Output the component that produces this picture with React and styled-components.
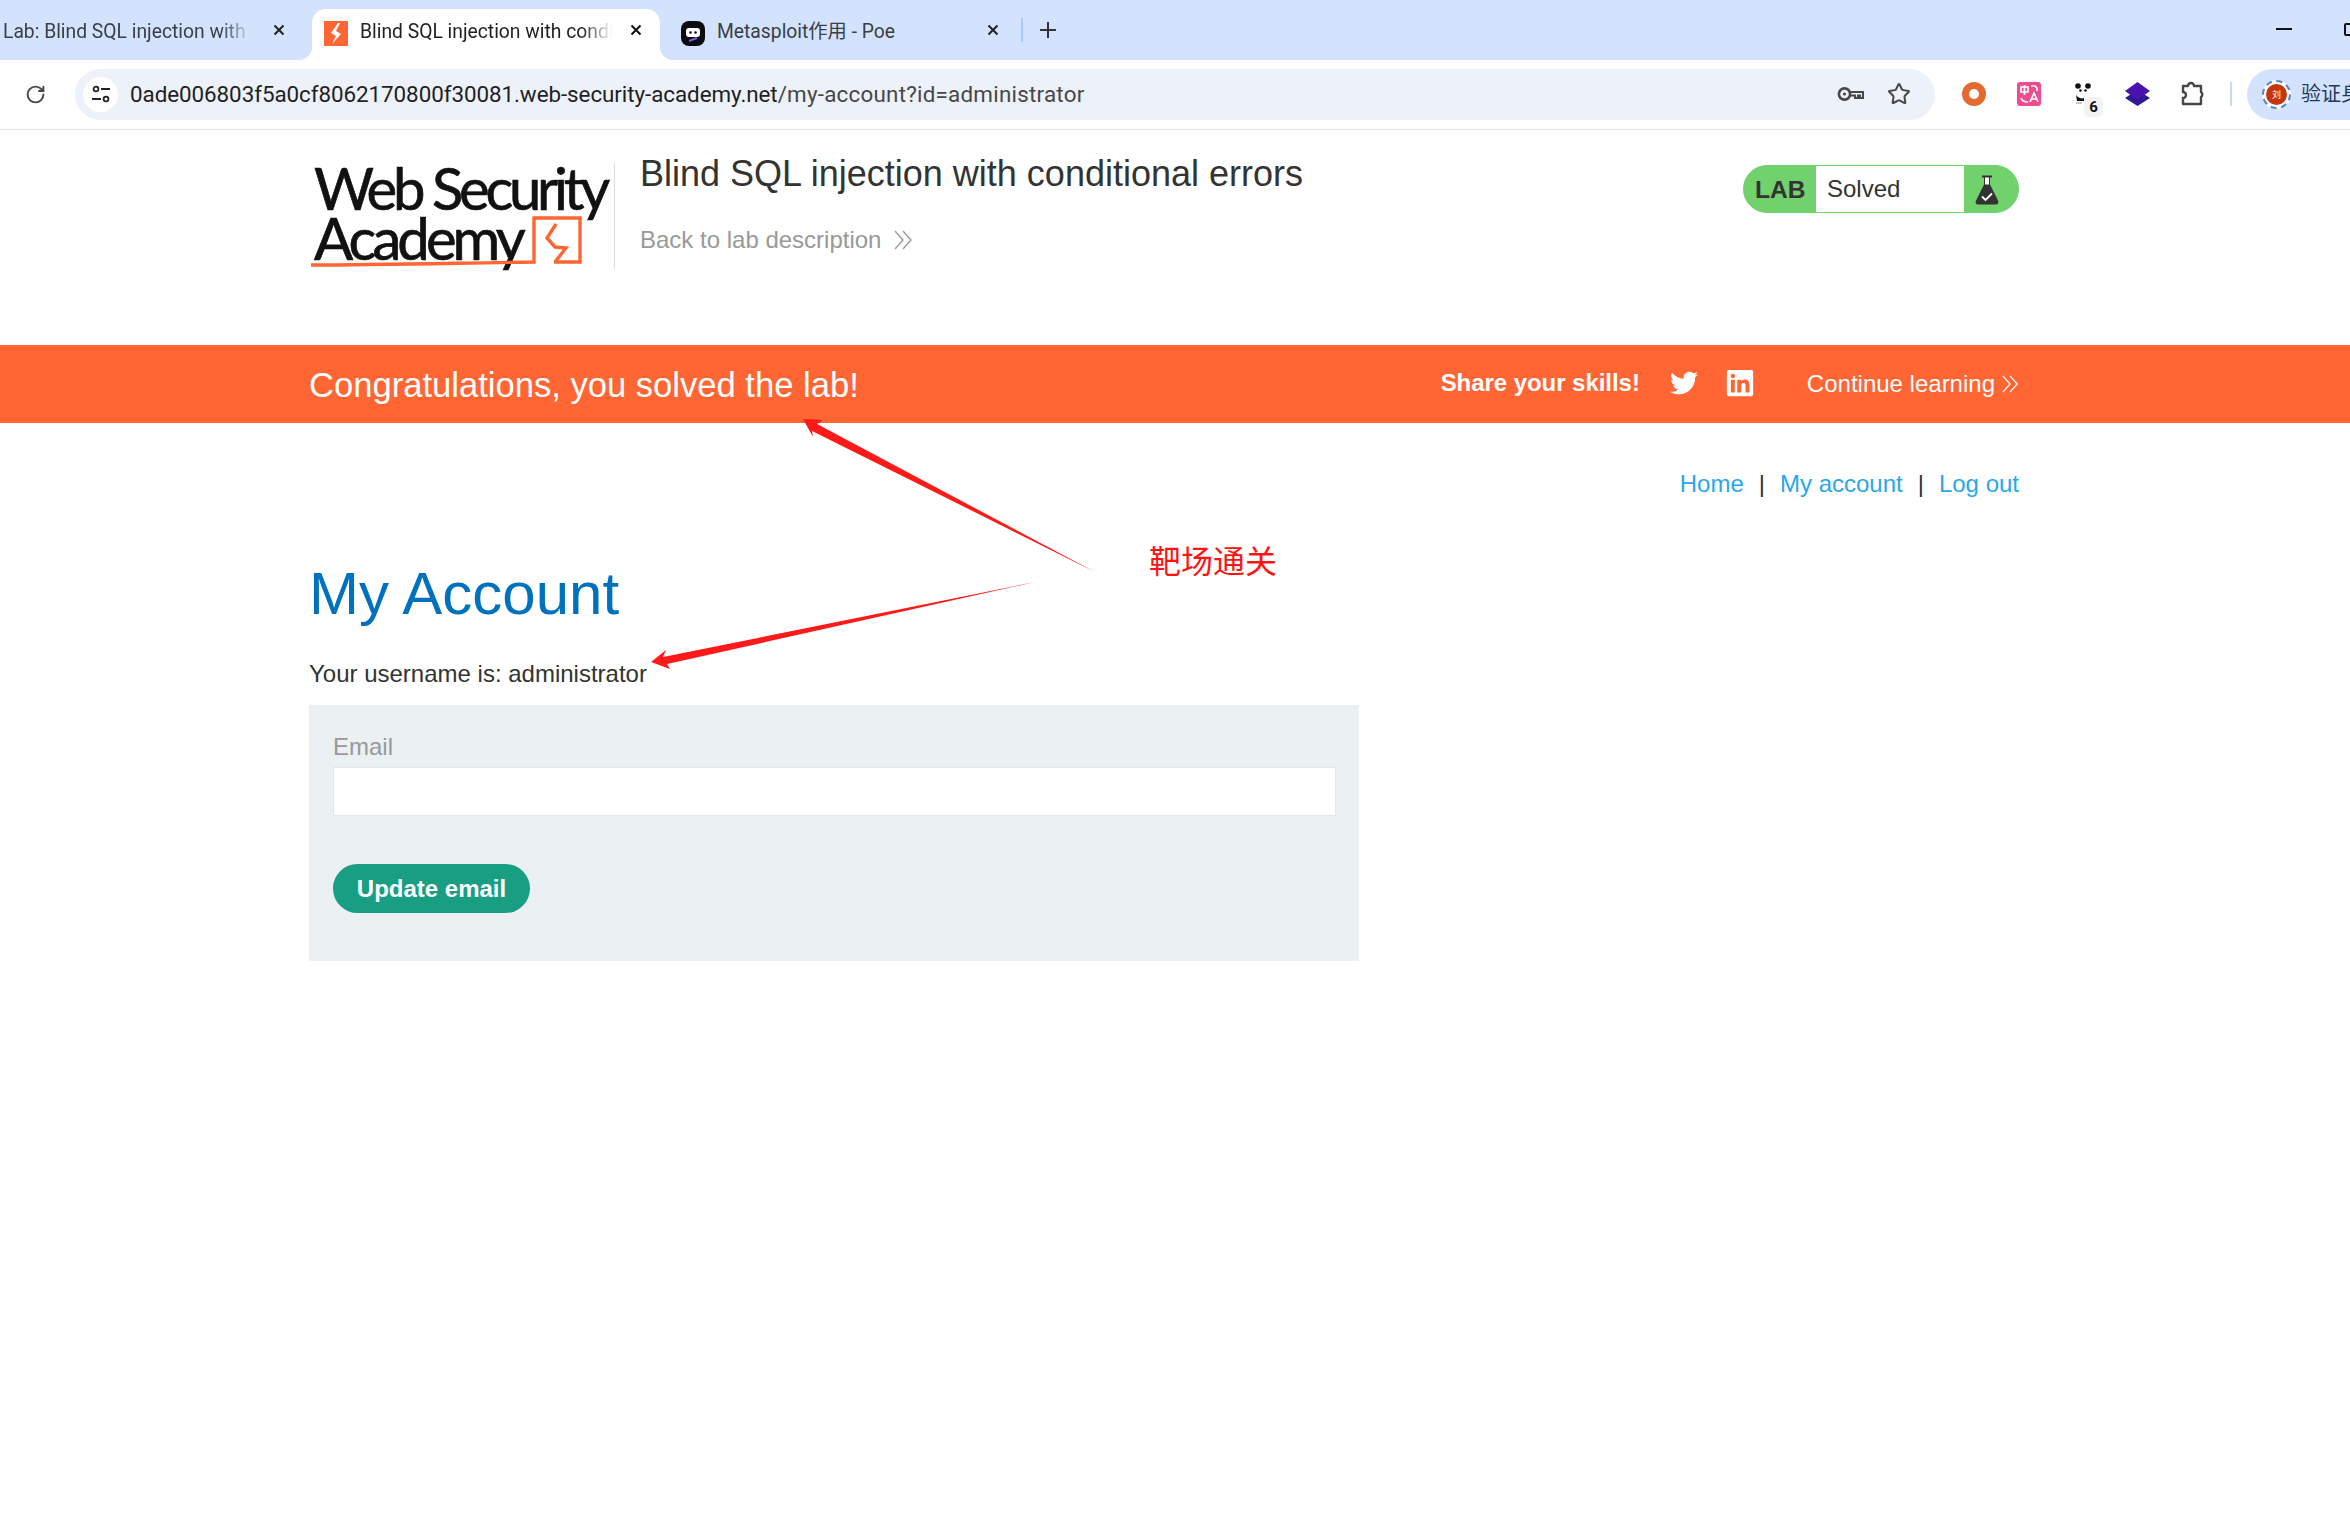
import React from "react";
import styled, { createGlobalStyle } from "styled-components";
import { FaTwitter, FaLinkedin } from "react-icons/fa";
import { RotateCw, Star } from "lucide-react";

const Global = createGlobalStyle`
  html, body { margin: 0; padding: 0; background: #fff; }
  body { font-family: "Liberation Sans", Arial, sans-serif; overflow: hidden; }
  * { box-sizing: border-box; }
`;

const Page = styled.div`
  position: relative;
  width: 2350px;
  height: 1513px;
  overflow: hidden;
  background: #fff;
`;

/* ---------- browser chrome ---------- */
const TabStrip = styled.div`
  display: flex;
  align-items: flex-end;
  height: 60px;
  background: #d3e3fd;
  position: relative;
`;
const Tab = styled.div`
  position: relative;
  display: flex;
  align-items: center;
  flex: none;
  width: ${(p) => p.$width}px;
  height: 51px;
  padding: 0 0 0 ${(p) => p.$pad}px;
  background: ${(p) => (p.$active ? "#fff" : "transparent")};
  border-radius: 14px 14px 0 0;
  font-family: Roboto, "Noto Sans CJK SC", sans-serif;
  font-size: 19.3px;
  color: #3a3f45;
  ${(p) =>
    p.$active &&
    `
    color: #1f1f1f;
    &::before, &::after {
      content: "";
      position: absolute;
      bottom: 0;
      width: 14px;
      height: 14px;
    }
    &::before { left: -14px; background: radial-gradient(circle at 0 0, transparent 14px, #fff 14.5px); }
    &::after { right: -14px; background: radial-gradient(circle at 100% 0, transparent 14px, #fff 14.5px); }
  `}
`;
const Favicon = styled.span`
  flex: none;
  display: flex;
  width: 24px;
  height: 25px;
  margin-right: 12px;
  margin-top: -2px;
`;
const TabTitle = styled.span`
  flex: none;
  width: ${(p) => p.$width}px;
  white-space: nowrap;
  overflow: hidden;
  line-height: 24px;
  margin-top: -5px;
  -webkit-mask-image: ${(p) =>
    p.$fade ? "linear-gradient(90deg, #000 88%, transparent 100%)" : "none"};
`;
const TabClose = styled.span`
  position: absolute;
  left: ${(p) => p.$left}px;
  top: 15px;
  width: 12px;
  height: 12px;
  display: flex;
`;
const TabSep = styled.span`
  width: 2px;
  height: 24px;
  background: #a8c7fa;
  margin: 0 0 18px 11px;
`;
const NewTab = styled.span`
  display: flex;
  width: 16px;
  height: 16px;
  margin: 0 0 22px 17px;
`;
const Minimize = styled.span`
  position: absolute;
  left: 2276px;
  top: 28px;
  width: 16px;
  height: 2px;
  background: #111;
`;
const Restore = styled.span`
  position: absolute;
  left: 2344px;
  top: 23px;
  width: 12px;
  height: 13px;
  border: 2px solid #111;
  border-radius: 2px;
`;
const AddressRow = styled.div`
  display: flex;
  align-items: center;
  height: 70px;
  padding-bottom: 1px;
  background: #fff;
  border-bottom: 1px solid #e3e3e3;
`;
const Reload = styled.span`
  flex: none;
  display: flex;
  width: 75px;
  justify-content: center;
  padding-right: 4px;
  color: #474747;
`;
const Omnibox = styled.div`
  flex: none;
  display: flex;
  align-items: center;
  width: 1860px;
  height: 51px;
  padding: 0 10px 0 8px;
  border-radius: 26px;
  background: #ecf1fa;
`;
const SiteButton = styled.span`
  flex: none;
  display: flex;
  align-items: center;
  justify-content: center;
  width: 35px;
  height: 35px;
  margin-right: 12px;
  border-radius: 50%;
  background: #fff;
`;
const Url = styled.span`
  flex: 1;
  font-family: Roboto, sans-serif;
  font-size: 22.4px;
  line-height: 30px;
  color: #1f1f1f;
  white-space: nowrap;
  letter-spacing: -0.06px;
`;
const UrlRest = styled.span`
  color: #474747;
  letter-spacing: 0.23px;
`;
const OmniIcon = styled.span`
  flex: none;
  display: flex;
  margin-left: ${(p) => p.$gap || 0}px;
  margin-right: ${(p) => p.$right || 0}px;
  color: #474747;
`;
const Extension = styled.span`
  position: relative;
  flex: none;
  display: flex;
  justify-content: ${(p) => (p.$start ? "flex-start" : "center")};
  padding-left: ${(p) => (p.$start ? 3 : 0)}px;
  width: 26px;
  margin-left: ${(p) => p.$gap}px;
`;
const CountBadge = styled.span`
  position: absolute;
  left: 12px;
  top: 14px;
  width: 19px;
  height: 20px;
  border-radius: 5px;
  background: #f3f3f3;
  font-family: Roboto, sans-serif;
  font-weight: 700;
  font-size: 15px;
  line-height: 20px;
  text-align: center;
  color: #111;
`;
const ToolbarSep = styled.span`
  flex: none;
  width: 2px;
  height: 24px;
  margin-left: 24px;
  background: #c7dafa;
`;
const Profile = styled.div`
  flex: none;
  display: flex;
  align-items: center;
  width: 140px;
  height: 51px;
  margin-left: 15px;
  padding-left: 15px;
  border-radius: 26px 0 0 26px;
  background: #d3e3fd;
`;
const Avatar = styled.span`
  flex: none;
  display: flex;
  align-items: center;
  justify-content: center;
  width: 29px;
  height: 29px;
  margin-right: 10px;
  border-radius: 50%;
  border: 2px dashed #5a85c2;
  background: #fff;
`;
const AvatarInner = styled.span`
  display: flex;
  align-items: center;
  justify-content: center;
  width: 21px;
  height: 21px;
  border-radius: 50%;
  background: #c5360f;
  color: #fff;
  font-family: "Noto Sans CJK SC", sans-serif;
  font-size: 9px;
`;
const ProfileName = styled.span`
  font-family: "Noto Sans CJK SC", sans-serif;
  font-size: 20px;
  line-height: 26px;
  margin-top: -2px;
  color: #1f3a5f;
  white-space: nowrap;
`;

/* ---------- site header ---------- */
const Header = styled.header`
  display: flex;
  height: 215px;
  padding: 0 331px 0 309px;
`;
const LogoBlock = styled.div`
  position: relative;
  flex: none;
  width: 306px;
  height: 106px;
  margin-top: 33px;
  border-right: 1px solid #dcdcdc;
`;
const LogoLine = styled.div`
  position: absolute;
  left: 5px;
  top: ${(p) => p.$top}px;
  font-family: Lato, "Open Sans", sans-serif;
  font-weight: 400;
  font-size: 58px;
  line-height: 50px;
  letter-spacing: ${(p) => p.$spacing}px;
  -webkit-text-stroke: 0.7px #111;
  color: #111;
  white-space: nowrap;
`;
const LogoMark = styled.svg`
  position: absolute;
  left: 0;
  top: 50px;
  width: 280px;
  height: 70px;
  overflow: visible;
`;
const TitleBlock = styled.div`
  flex: 1;
  padding: 22px 0 0 25px;
`;
const LabTitle = styled.h2`
  margin: 0;
  font-weight: 400;
  font-size: 36px;
  line-height: 44px;
  color: #333332;
`;
const BackLink = styled.a`
  display: flex;
  align-items: center;
  margin-top: 29px;
  font-size: 24px;
  line-height: 30px;
  color: #999;
`;
const Chevrons = styled.svg`
  flex: none;
  width: ${(p) => p.$w || 20}px;
  height: 22px;
  margin-left: ${(p) => p.$gap || 12}px;
`;
const StatusWidget = styled.div`
  flex: none;
  display: flex;
  align-self: flex-start;
  width: 276px;
  height: 48px;
  margin-top: 35px;
  border: 1px solid #70d16d;
  border-radius: 24px;
  overflow: hidden;
  background: #70d16d;
`;
const StatusLabel = styled.span`
  flex: none;
  width: 72px;
  padding-left: 11px;
  font-weight: 700;
  font-size: 24.6px;
  line-height: 47px;
  color: #333332;
`;
const StatusValue = styled.span`
  flex: none;
  width: 148px;
  padding-left: 11px;
  background: #fff;
  font-size: 24px;
  line-height: 46px;
  color: #333332;
`;
const StatusIcon = styled.span`
  flex: 1;
  display: flex;
  justify-content: center;
  align-items: center;
  padding-right: 9px;
`;

/* ---------- banner ---------- */
const Banner = styled.section`
  display: flex;
  align-items: center;
  height: 78px;
  padding: 0 331px 0 309px;
  background: #ff6633;
  color: #fff;
`;
const BannerTitle = styled.h4`
  flex: 1;
  margin: 2px 0 0;
  font-weight: 400;
  font-size: 34.6px;
  line-height: 44px;
`;
const ShareLabel = styled.span`
  font-weight: 700;
  font-size: 23.9px;
  margin-top: -3px;
`;
const Social = styled.span`
  display: flex;
  margin-left: ${(p) => p.$gap}px;
  margin-top: -2px;
`;
const Continue = styled.a`
  display: flex;
  align-items: center;
  margin-left: 52px;
  font-size: 24px;
  line-height: 30px;
  color: #fff;
`;

/* ---------- content ---------- */
const Main = styled.main`
  padding: 43px 331px 0 309px;
`;
const TopLinks = styled.nav`
  display: flex;
  justify-content: flex-end;
  font-size: 24px;
  line-height: 36px;
  color: #333332;
`;
const TopLink = styled.a`
  color: #29a8e8;
`;
const LinkSep = styled.span`
  margin: 0 15px;
`;
const Heading = styled.h1`
  margin: 52px 0 0;
  font-weight: 400;
  font-size: 60px;
  line-height: 80px;
  color: #0071bc;
`;
const Username = styled.p`
  margin: 22px 0 0;
  font-size: 24px;
  line-height: 36px;
  color: #333332;
`;
const Form = styled.form`
  width: 1050px;
  height: 256px;
  margin-top: 13px;
  padding: 24px 24px 0;
  background: #ebf0f2;
`;
const FieldLabel = styled.label`
  display: block;
  margin-bottom: 2px;
  font-size: 24px;
  line-height: 36px;
  color: #999;
`;
const TextInput = styled.input`
  display: block;
  width: 1003px;
  height: 49px;
  border: 1px solid #e6e6e6;
  background: #fff;
  outline: none;
`;
const Submit = styled.button`
  display: block;
  width: 197px;
  height: 49px;
  margin-top: 48px;
  padding: 0;
  border: 0;
  border-radius: 25px;
  background: #189e82;
  color: #fff;
  font-family: inherit;
  font-weight: 700;
  font-size: 24px;
`;

/* ---------- annotations ---------- */
const Annotations = styled.svg`
  position: absolute;
  left: 0;
  top: 0;
  width: 2350px;
  height: 1513px;
  pointer-events: none;
`;
const AnnotationText = styled.div`
  position: absolute;
  left: 1149px;
  top: 537px;
  font-family: "Noto Sans CJK SC", sans-serif;
  font-weight: 400;
  font-size: 32px;
  line-height: 44px;
  color: #ff1414;
  white-space: nowrap;
`;

const Cross = ({ c = "#222" }) => (
  <svg width="12" height="12" viewBox="0 0 12 12">
    <path d="M1.5 1.5l9 9M10.5 1.5l-9 9" stroke={c} strokeWidth="2" fill="none" />
  </svg>
);
const DoubleChevron = ({ color, w, gap }) => (
  <Chevrons $w={w} $gap={gap} viewBox="0 0 20 22">
    <path d="M2 2l8 9-8 9M10 2l8 9-8 9" fill="none" stroke={color} strokeWidth="1.4" />
  </Chevrons>
);

export default function App() {
  return (
    <Page>
      <Global />
      <TabStrip>
        <Tab $width={312} $pad={3}>
          <TabTitle $width={248} $fade>Lab: Blind SQL injection with conditional errors</TabTitle>
          <TabClose $left={273}><Cross /></TabClose>
        </Tab>
        <Tab $width={348} $pad={12} $active>
          <Favicon>
            <svg width="24" height="25" viewBox="0 0 24 25">
              <rect width="24" height="25" fill="#ff6633" />
              <path d="M14 2L7 12l5 3-4 8 9-10-5-3 4-8z" fill="#fff" />
            </svg>
          </Favicon>
          <TabTitle $width={252} $fade>Blind SQL injection with conditional errors</TabTitle>
          <TabClose $left={318}><Cross c="#111" /></TabClose>
        </Tab>
        <Tab $width={350} $pad={21}>
          <Favicon>
            <svg width="24" height="25" viewBox="0 0 24 25">
              <rect width="24" height="25" rx="8" fill="#0b0b0f" />
              <rect x="5" y="7" width="14" height="9" rx="3" fill="#fff" />
              <circle cx="9.5" cy="11.5" r="1.3" fill="#0b0b0f" />
              <circle cx="14.5" cy="11.5" r="1.3" fill="#0b0b0f" />
              <path d="M8 20l8-3" stroke="#7d5bd6" strokeWidth="2" />
            </svg>
          </Favicon>
          <TabTitle $width={260}>Metasploit作用 - Poe</TabTitle>
          <TabClose $left={327}><Cross /></TabClose>
        </Tab>
        <TabSep />
        <NewTab>
          <svg width="16" height="16" viewBox="0 0 16 16">
            <path d="M8 0v16M0 8h16" stroke="#333" strokeWidth="2" />
          </svg>
        </NewTab>
        <Minimize />
        <Restore />
      </TabStrip>

      <AddressRow>
        <Reload><RotateCw size={21} strokeWidth={2.2} /></Reload>
        <Omnibox>
          <SiteButton>
            <svg width="20" height="18" viewBox="0 0 20 18">
              <circle cx="5" cy="4" r="2.4" fill="none" stroke="#222" strokeWidth="1.8" />
              <path d="M10 4h9M1 14h9" stroke="#222" strokeWidth="1.8" />
              <circle cx="15" cy="14" r="2.4" fill="none" stroke="#222" strokeWidth="1.8" />
            </svg>
          </SiteButton>
          <Url>
            0ade006803f5a0cf8062170800f30081.web-security-academy.net<UrlRest>/my-account?id=administrator</UrlRest>
          </Url>
          <OmniIcon $right={23}>
            <svg width="27" height="16" viewBox="0 0 27 16">
              <circle cx="7.5" cy="8" r="5.6" fill="none" stroke="#474747" strokeWidth="2.6" />
              <circle cx="7.5" cy="8" r="1.6" fill="#474747" />
              <path d="M13 6h13v6h-3V9.5h-2V12h-3V9.5h-5" fill="none" stroke="#474747" strokeWidth="2" />
            </svg>
          </OmniIcon>
          <OmniIcon $right={14}><Star size={24} strokeWidth={2} /></OmniIcon>
        </Omnibox>
        <Extension $gap={26}>
          <svg width="24" height="24" viewBox="0 0 24 24">
            <circle cx="12" cy="12" r="8.5" fill="none" stroke="#e46a32" strokeWidth="7" />
          </svg>
        </Extension>
        <Extension $gap={29}>
          <svg width="24" height="24" viewBox="0 0 24 24">
            <rect width="24" height="24" rx="3" fill="#ee4c8e" />
            <path d="M4 5h7v5H4zM7.5 3v10M14 4h4l2 2v3M4 16c1 3 3 4 7 4" fill="none" stroke="#fff" strokeWidth="1.7" />
            <path d="M13 20l4-9 4 9M14.5 17h5" fill="none" stroke="#fff" strokeWidth="1.7" />
          </svg>
        </Extension>
        <Extension $gap={30} $start>
          <svg width="16" height="22" viewBox="0 0 16 22">
            <circle cx="8" cy="8" r="7" fill="#fff" />
            <circle cx="3" cy="3" r="2.8" fill="#111" />
            <circle cx="13" cy="3" r="2.8" fill="#111" />
            <path d="M1 12c2 3 6 4 8 3v3H2z" fill="#111" />
            <circle cx="5.5" cy="7.5" r="1.3" fill="#111" />
            <circle cx="10.5" cy="7.5" r="1.3" fill="#111" />
            <path d="M1 20h6" stroke="#aaa" strokeWidth="1.3" />
          </svg>
          <CountBadge>6</CountBadge>
        </Extension>
        <Extension $gap={26}>
          <svg width="25" height="24" viewBox="0 0 25 24">
            <path d="M12.5 8L25 16l-12.5 8L0 16z" fill="#2e1a8f" />
            <path d="M12.5 0L25 9l-12.5 9L0 9z" fill="#4c12b0" />
          </svg>
        </Extension>
        <Extension $gap={30}>
          <svg width="24" height="26" viewBox="0 0 24 26">
            <path d="M2 5h5a3 3 0 0 1 6 0h7v6a3 3 0 0 1 0 5v7H2v-6a3 3 0 0 0 0-6z" fill="none" stroke="#474747" strokeWidth="2.4" strokeLinejoin="round" />
          </svg>
        </Extension>
        <ToolbarSep />
        <Profile>
          <Avatar><AvatarInner>刘</AvatarInner></Avatar>
          <ProfileName>验证身份</ProfileName>
        </Profile>
      </AddressRow>

      <Header>
        <LogoBlock>
          <LogoLine $top={0} $spacing={-4.2}>Web Security</LogoLine>
          <LogoLine $top={50} $spacing={-3.9}>Academy</LogoLine>
          <LogoMark viewBox="0 0 280 70">
            <path d="M2 52C70 52 150 50 225 49V5h46v44h-26" fill="none" stroke="#ff6633" strokeWidth="3.4" />
            <path d="M247 11l-9 14 8 9 11 1-11 14" fill="none" stroke="#ff6633" strokeWidth="3.4" />
          </LogoMark>
        </LogoBlock>
        <TitleBlock>
          <LabTitle>Blind SQL injection with conditional errors</LabTitle>
          <BackLink>
            Back to lab description
            <DoubleChevron color="#999" />
          </BackLink>
        </TitleBlock>
        <StatusWidget>
          <StatusLabel>LAB</StatusLabel>
          <StatusValue>Solved</StatusValue>
          <StatusIcon>
            <svg width="24" height="31" viewBox="0 0 24 30">
              <path d="M7 1h10v2h-2v7l8 16c1 2 0 4-2 4H3c-2 0-3-2-2-4l8-16V3H7z" fill="#333332" />
              <path d="M10 3h4v7h-4z" fill="#fff" />
              <path d="M7 22l3.5 3.5L17 19" stroke="#fff" strokeWidth="1.8" fill="none" />
            </svg>
          </StatusIcon>
        </StatusWidget>
      </Header>

      <Banner>
        <BannerTitle>Congratulations, you solved the lab!</BannerTitle>
        <ShareLabel>Share your skills!</ShareLabel>
        <Social $gap={30}><FaTwitter size={28} /></Social>
        <Social $gap={27}><FaLinkedin size={30} /></Social>
        <Continue>
          Continue learning
          <DoubleChevron color="#fff" w={18} gap={6} />
        </Continue>
      </Banner>

      <Main>
        <TopLinks>
          <TopLink>Home</TopLink>
          <LinkSep>|</LinkSep>
          <TopLink>My account</TopLink>
          <LinkSep>|</LinkSep>
          <TopLink>Log out</TopLink>
        </TopLinks>
        <Heading>My Account</Heading>
        <Username>Your username is: administrator</Username>
        <Form>
          <FieldLabel>Email</FieldLabel>
          <TextInput />
          <Submit type="button">Update email</Submit>
        </Form>
      </Main>

      <Annotations viewBox="0 0 2350 1513">
        <path d="M803 419L823 420L817 424L1095 572L812 431L813 437Z" fill="#ff1a1a" />
        <path d="M651 662L666 650L663 657L1035 582L667 664L670 669Z" fill="#ff1a1a" />
      </Annotations>
      <AnnotationText>靶场通关</AnnotationText>
    </Page>
  );
}
